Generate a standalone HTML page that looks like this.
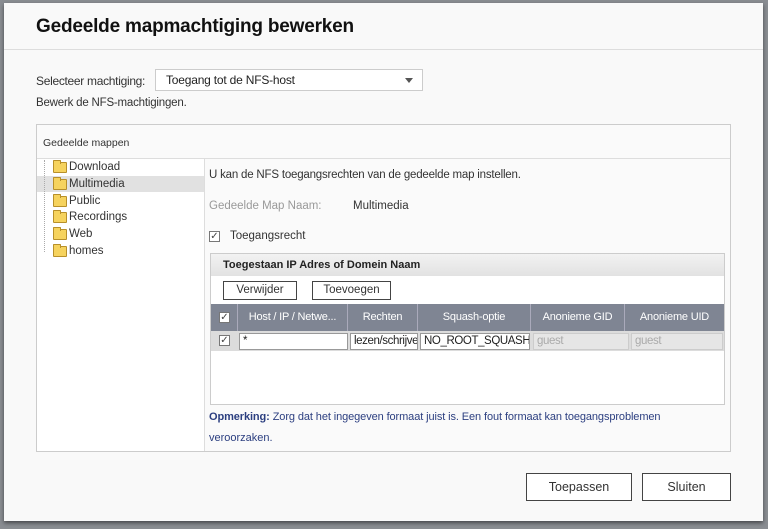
<!DOCTYPE html>
<html><head><meta charset="utf-8"><style>
*{box-sizing:border-box;margin:0;padding:0}
body{width:768px;height:529px;background:#8a8d92;position:relative;overflow:hidden;font-family:"Liberation Sans",sans-serif;font-size:11px;color:#333}
.a{position:absolute;white-space:nowrap}
#dlg{position:absolute;left:4px;top:3px;width:759px;height:518px;background:#f9f9f9;box-shadow:0 2px 4px rgba(0,0,0,.5)}
.fold{position:absolute;width:14px;height:11px;background:#f6d35e;border:1px solid #b8902a;border-radius:1px}
.fold:before{content:"";position:absolute;left:-1px;top:-3px;width:6px;height:3px;background:#f6d35e;border:1px solid #b8902a;border-bottom:none;border-radius:1px 1px 0 0}
.btn{position:absolute;border:1px solid #444;background:#fff;text-align:center;color:#333}
.th{position:absolute;top:304px;height:27px;background:#7f8593;color:#fff;line-height:27px;text-align:center;border-right:1px solid #aab;letter-spacing:-0.2px}
.cb{position:absolute;width:11px;height:11px;border:1px solid #777;background:#fff;font-size:10px;line-height:9px;text-align:center;color:#444}
.in{position:absolute;top:333px;height:17px;border:1px solid #999;background:#fff;line-height:15px;padding-left:3px;font-size:11.5px;color:#222;overflow:hidden;letter-spacing:-0.4px}
</style></head><body>
<div id="dlg"></div>
<div class="a" style="left:36px;top:16px;font-size:19px;font-weight:bold;color:#111;letter-spacing:-0.2px">Gedeelde mapmachtiging bewerken</div>
<div class="a" style="left:4px;top:49px;width:759px;height:1px;background:#ddd"></div>
<div class="a" style="left:36px;top:74px;font-size:12px;letter-spacing:-0.3px">Selecteer machtiging:</div>
<div class="a" style="left:155px;top:69px;width:268px;height:22px;border:1px solid #ccc;background:#fff;padding-left:10px;line-height:20px;font-size:12px;color:#222;letter-spacing:-0.2px">Toegang tot de NFS-host</div>
<div class="a" style="left:405px;top:78px;width:0;height:0;border-left:4px solid transparent;border-right:4px solid transparent;border-top:5px solid #555"></div>
<div class="a" style="left:36px;top:97px;font-size:11.5px;letter-spacing:-0.2px">Bewerk de NFS-machtigingen.</div>
<div class="a" style="left:36px;top:124px;width:695px;height:328px;border:1px solid #ccc;background:#fafafa"></div>
<div class="a" style="left:43px;top:137px;font-size:10.5px">Gedeelde mappen</div>
<div class="a" style="left:37px;top:158px;width:693px;height:1px;background:#ddd"></div>
<div class="a" style="left:204px;top:159px;width:1px;height:292px;background:#ddd"></div>
<div class="a" style="left:37px;top:159px;width:167px;height:292px;background:#fff"></div>
<div class="a" style="left:37px;top:176px;width:167px;height:16px;background:#e1e1e1"></div>
<div class="a" style="left:44px;top:160px;width:0;height:92px;border-left:1px dotted #aaa"></div>
<div class="fold" style="left:53px;top:162px"></div><div class="a" style="left:69px;top:161px;font-size:11.5px">Download</div>
<div class="fold" style="left:53px;top:179px"></div><div class="a" style="left:69px;top:178px;font-size:11.5px">Multimedia</div>
<div class="fold" style="left:53px;top:196px"></div><div class="a" style="left:69px;top:195px;font-size:11.5px">Public</div>
<div class="fold" style="left:53px;top:212px"></div><div class="a" style="left:69px;top:211px;font-size:11.5px">Recordings</div>
<div class="fold" style="left:53px;top:229px"></div><div class="a" style="left:69px;top:228px;font-size:11.5px">Web</div>
<div class="fold" style="left:53px;top:246px"></div><div class="a" style="left:69px;top:245px;font-size:11.5px">homes</div>
<div class="a" style="left:209px;top:169px;font-size:11.5px;letter-spacing:-0.2px">U kan de NFS toegangsrechten van de gedeelde map instellen.</div>
<div class="a" style="left:209px;top:200px;font-size:11.5px;color:#999">Gedeelde Map Naam:</div>
<div class="a" style="left:353px;top:200px;font-size:11.5px">Multimedia</div>
<div class="cb" style="left:209px;top:231px"> ✓</div>
<div class="a" style="left:230px;top:230px;font-size:11.5px">Toegangsrecht</div>
<div class="a" style="left:210px;top:253px;width:515px;height:152px;border:1px solid #ccc;background:#fff"></div>
<div class="a" style="left:211px;top:254px;width:513px;height:22px;background:linear-gradient(#f2f2f2,#e2e2e2);font-weight:bold;padding-left:12px;line-height:22px;color:#222">Toegestaan IP Adres of Domein Naam</div>
<div class="btn" style="left:223px;top:281px;width:74px;height:19px;line-height:17px;font-size:11.5px">Verwijder</div>
<div class="btn" style="left:312px;top:281px;width:79px;height:19px;line-height:17px;font-size:11.5px">Toevoegen</div>
<div class="th" style="left:211px;width:27px"></div>
<div class="cb" style="left:219px;top:312px">✓</div>
<div class="th" style="left:238px;width:110px">Host / IP / Netwe...</div>
<div class="th" style="left:348px;width:70px">Rechten</div>
<div class="th" style="left:418px;width:113px">Squash-optie</div>
<div class="th" style="left:531px;width:94px">Anonieme GID</div>
<div class="th" style="left:625px;width:99px;border-right:none">Anonieme UID</div>
<div class="a" style="left:211px;top:331px;width:513px;height:20px;background:#dcdcdc"></div>
<div class="cb" style="left:219px;top:335px">✓</div>
<div class="in" style="left:239px;width:109px">*</div>
<div class="in" style="left:350px;width:68px">lezen/schrijven</div>
<div class="in" style="left:420px;width:110px">NO_ROOT_SQUASH</div>
<div class="in" style="left:533px;width:96px;background:#e6e6e6;color:#aaa;border-color:#ccc">guest</div>
<div class="in" style="left:631px;width:92px;background:#e6e6e6;color:#aaa;border-color:#ccc">guest</div>
<div class="a" style="left:209px;top:411px;font-size:11px;color:#2c3f80;letter-spacing:-0.1px"><b>Opmerking:</b> Zorg dat het ingegeven formaat juist is. Een fout formaat kan toegangsproblemen</div>
<div class="a" style="left:209px;top:432px;font-size:11px;color:#2c3f80">veroorzaken.</div>
<div class="btn" style="left:526px;top:473px;width:106px;height:28px;line-height:26px;font-size:12.5px">Toepassen</div>
<div class="btn" style="left:642px;top:473px;width:89px;height:28px;line-height:26px;font-size:12.5px">Sluiten</div>
</body></html>
